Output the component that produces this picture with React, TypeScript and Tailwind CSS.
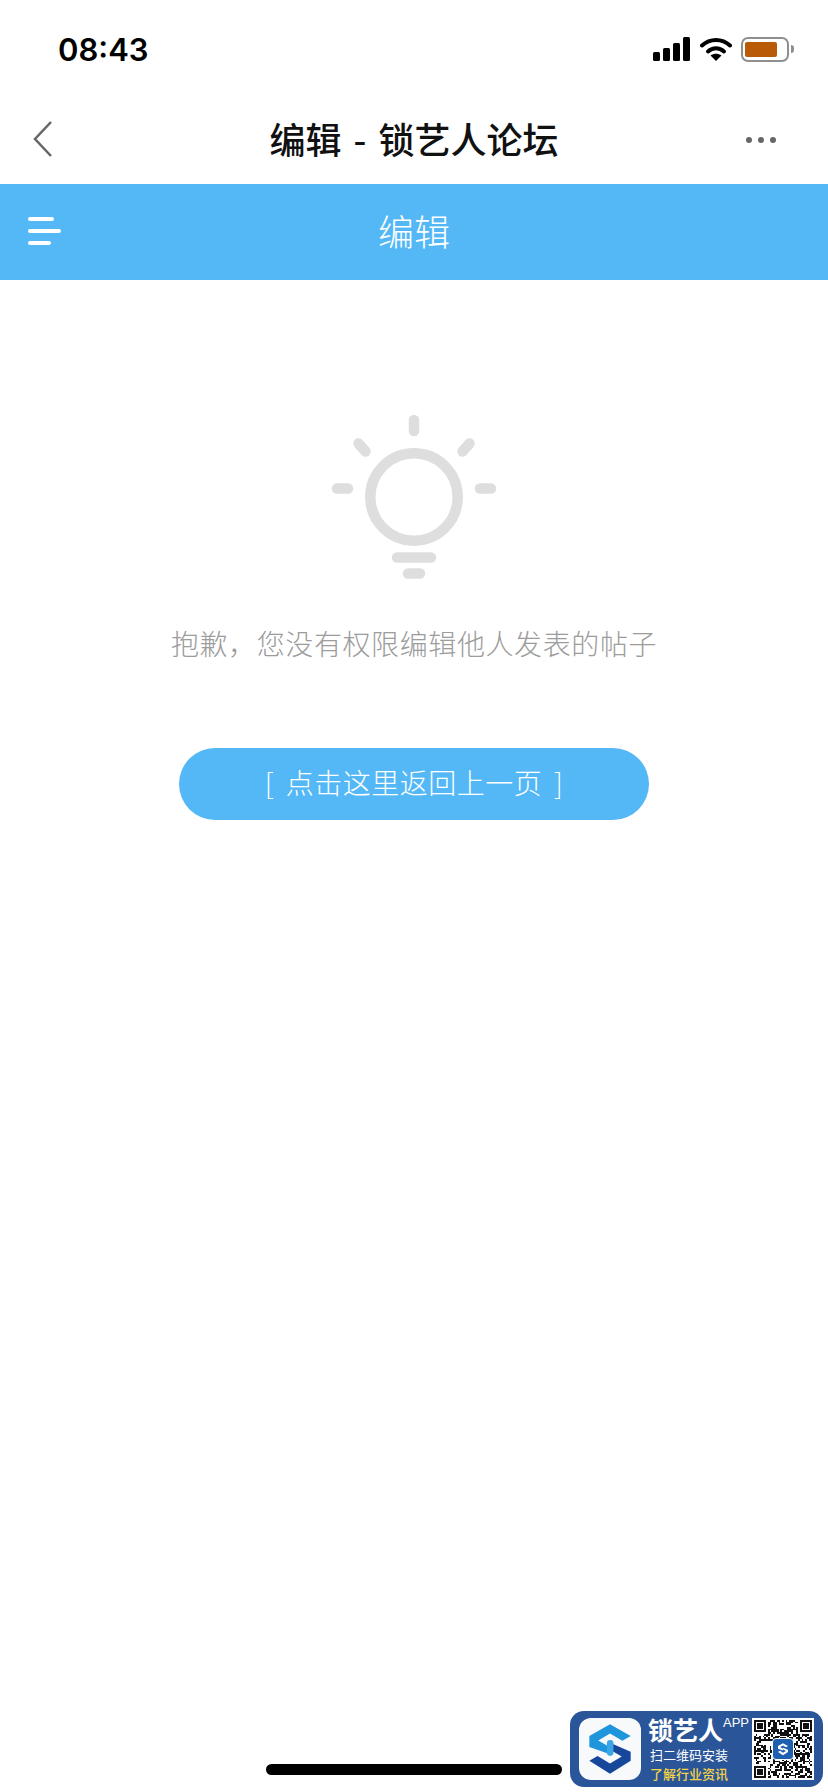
const cjk = "font-['Noto_Sans_CJK_SC','Noto_Sans_CJK_JP',sans-serif]"

const qrSize = 33
const qrCells: [number, number][] = []
for (let y = 0; y < qrSize; y++) {
  for (let x = 0; x < qrSize; x++) {
    const inFinder = (x < 8 && y < 8) || (x > qrSize - 9 && y < 8) || (x < 8 && y > qrSize - 9)
    const inCenter = x > 11 && x < 21 && y > 11 && y < 21
    if (inFinder || inCenter) continue
    const hash = Math.sin(x * 12.9898 + y * 78.233) * 43758.5453
    if (hash - Math.floor(hash) > 0.5) qrCells.push([x, y])
  }
}

function Finder({ x, y }: { x: number; y: number }) {
  return (
    <g>
      <rect x={x + 0.5} y={y + 0.5} width={6} height={6} fill="none" stroke="#111" />
      <rect x={x + 2} y={y + 2} width={3} height={3} fill="#111" />
    </g>
  )
}

const topArm = 'M48 72 108 38l60 34-24 14-36-21-34 20 34 20v20L48 104z'
const bottomArm = 'M168 144 108 182l-60-38 24-14 36 22 34-20-34-20V92l60 26z'

function LogoMark({ size }: { size: number }) {
  return (
    <svg width={size} height={size} viewBox="18 20 180 180">
      <path d={bottomArm} fill="#17479b" />
      <path d={topArm} fill="#1f95dc" />
      <rect x="99" y="84" width="19" height="46" rx="9.5" fill="#3aa6e6" />
    </svg>
  )
}

function QrCode() {
  return (
    <div className="relative h-[62px] w-[62px] bg-white">
      <svg width={62} height={62} viewBox="-1 -1 35 35" shapeRendering="crispEdges">
        {qrCells.map(([x, y]) => (
          <rect key={`${x}-${y}`} x={x} y={y} width={1} height={1} fill="#111" />
        ))}
        <Finder x={0} y={0} />
        <Finder x={26} y={0} />
        <Finder x={0} y={26} />
      </svg>
      <div className="absolute left-[20px] top-[20px] flex h-[22px] w-[22px] items-center justify-center rounded-[4px] border border-white bg-[#1f5fb0]">
        <svg width={18} height={18} viewBox="0 0 216 216">
          <path d={topArm} fill="#fff" />
          <path d={bottomArm} fill="#fff" />
        </svg>
      </div>
    </div>
  )
}

function StatusBar() {
  return (
    <div className="flex h-[98px] items-center justify-between pl-[58px] pr-[34px]">
      <span className="font-['Inter',sans-serif] text-[31px] font-semibold leading-none text-black">08:43</span>
      <div className="flex items-center">
        <svg width={37} height={24} viewBox="0 0 37 24" className="mr-[10px]">
          <rect x="0" y="15" width="7" height="9" rx="1.5" fill="#000" />
          <rect x="10" y="11" width="7" height="13" rx="1.5" fill="#000" />
          <rect x="20" y="6" width="7" height="18" rx="1.5" fill="#000" />
          <rect x="30" y="0" width="7" height="24" rx="1.5" fill="#000" />
        </svg>
        <svg width={32} height={24} viewBox="0 0 32 24" className="mr-[9px]">
          <path d="M2 8.500C10 1 22 1 30 8.500" fill="none" stroke="#000" strokeWidth="4" strokeLinecap="round" />
          <path d="M8 14.500c4.800-4.300 11.200-4.300 16 0" fill="none" stroke="#000" strokeWidth="4" strokeLinecap="round" />
          <path d="M16 24l-5.500-5.500c3.200-2.400 7.800-2.400 11 0z" fill="#000" />
        </svg>
        <div className="flex h-[25px] w-[48px] items-center rounded-[7px] border-2 border-[#8f8f8f] pl-[2px]">
          <div className="h-[15px] w-[32px] rounded-[2px] bg-[#b85a06]" />
        </div>
        <div className="ml-[2px] h-[8px] w-[3px] rounded-r-sm bg-[#8f8f8f]" />
      </div>
    </div>
  )
}

function NavBar() {
  return (
    <div className="relative flex h-[86px] items-center justify-center pb-[7px]">
      <svg width={20} height={38} viewBox="0 0 20 38" className="absolute left-[33px] top-[22px]">
        <path d="M18 2 2 19l16 17" fill="none" stroke="#666" strokeWidth="2.500" />
      </svg>
      <h1 className={`${cjk} text-[36px] font-medium leading-none text-[#111] [word-spacing:4px]`}>编辑 - 锁艺人论坛</h1>
      <div className="absolute right-[52px] top-[39px] flex gap-[6px]">
        <span className="h-[6px] w-[6px] rounded-full bg-[#666]" />
        <span className="h-[6px] w-[6px] rounded-full bg-[#666]" />
        <span className="h-[6px] w-[6px] rounded-full bg-[#666]" />
      </div>
    </div>
  )
}

function BlueHeader() {
  return (
    <div className="relative flex h-[96px] items-center justify-center bg-[#53b8f5] pb-[5px]">
      <div className="absolute left-[28px] top-[33px] flex flex-col gap-[8px]">
        <span className="h-[4px] w-[26px] rounded-full bg-white" />
        <span className="h-[4px] w-[33px] rounded-full bg-white" />
        <span className="h-[4px] w-[23px] rounded-full bg-white" />
      </div>
      <span className={`${cjk} text-[36px] font-light leading-none text-white`}>编辑</span>
    </div>
  )
}

function BulbIcon() {
  return (
    <svg width={166} height={166} viewBox="0 0 166 166" fill="none" stroke="#dedede" strokeWidth="10.500" strokeLinecap="round">
      <circle cx="83" cy="84" r="43.700" />
      <path d="M83 7v11" />
      <path d="M6 75.500h11" />
      <path d="M149 75.500h11" />
      <path d="M27.500 30.500l7 8" />
      <path d="M138.500 30.500l-7 8" />
      <path d="M66 144.500h34" />
      <path d="M77 160.500h12" />
    </svg>
  )
}

function AppBanner() {
  return (
    <div className="absolute bottom-[5px] right-[5px] flex h-[76px] w-[253px] items-center rounded-[14px] bg-[#2a5598] pl-[9px]">
      <div className="flex h-[62px] w-[62px] items-center justify-center rounded-[12px] bg-[#f7f9fb]">
        <LogoMark size={62} />
      </div>
      <div className="ml-[7px] flex w-[104px] flex-col">
        <div className="flex items-start">
          <span className={`${cjk} text-[25px] font-bold leading-[26px] text-white`}>锁艺人</span>
          <span className="font-['Liberation_Sans',sans-serif] text-[13px] leading-[14px] text-white">APP</span>
        </div>
        <span className={`${cjk} ml-[2px] mt-[5px] text-[13px] leading-[16px] text-white`}>扫二维码安装</span>
        <span className={`${cjk} ml-[2px] mt-[3px] text-[13px] font-medium leading-[16px] text-[#f5d442]`}>了解行业资讯</span>
      </div>
      <QrCode />
    </div>
  )
}

export default function App() {
  return (
    <div className="relative h-[1792px] w-[828px] overflow-hidden bg-white">
      <StatusBar />
      <NavBar />
      <BlueHeader />
      <main className="flex flex-col items-center pt-[133px]">
        <BulbIcon />
        <p className={`${cjk} mt-[44px] text-[28px] font-light leading-[40px] tracking-[0.6px] text-[#9c9c9c]`}>抱歉，您没有权限编辑他人发表的帖子</p>
        <button className={`${cjk} mt-[85px] flex h-[72px] w-[470px] items-center justify-center rounded-full bg-[#53b8f5] pb-[4px] text-[28px] font-light tracking-[0.5px] text-white [word-spacing:5px]`}>
          [ 点击这里返回上一页 ]
        </button>
      </main>
      <div className="absolute bottom-[17px] left-[266px] h-[11px] w-[296px] rounded-full bg-black" />
      <AppBanner />
    </div>
  )
}
